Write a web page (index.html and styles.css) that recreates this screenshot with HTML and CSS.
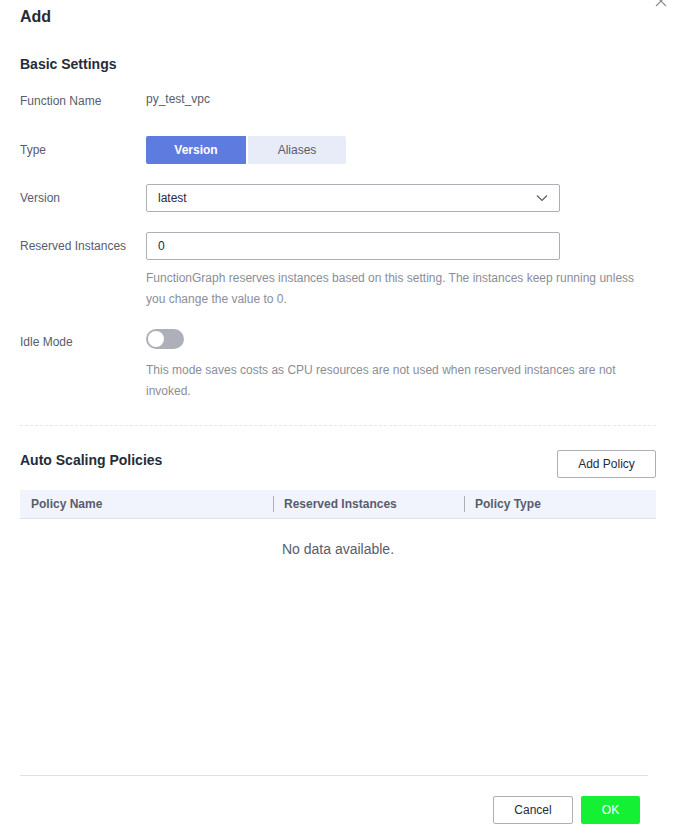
FILE: index.html
```html
<!DOCTYPE html>
<html>
<head>
<meta charset="utf-8">
<link rel="stylesheet" href="styles.css">
</head>
<body>
<div class="dialog">
  <button class="close" aria-label="Close">
    <svg width="12" height="12" viewBox="0 0 12 12"><path d="M1 1L11 11M11 1L1 11" stroke="#8a8e99" stroke-width="1.2" fill="none"/></svg>
  </button>
  <h1 class="title">Add</h1>
  <h2 class="section-title first">Basic Settings</h2>

  <div class="row row-name">
    <div class="label">Function Name</div>
    <div class="value">py_test_vpc</div>
  </div>

  <div class="row">
    <div class="label">Type</div>
    <div class="segmented">
      <span class="seg active">Version</span>
      <span class="seg">Aliases</span>
    </div>
  </div>

  <div class="row">
    <div class="label">Version</div>
    <div class="field select">
      <span>latest</span>
      <svg width="12" height="8" viewBox="0 0 12 8"><path d="M1 1.5L6 6.5L11 1.5" stroke="#575d6c" stroke-width="1.2" fill="none"/></svg>
    </div>
  </div>

  <div class="row">
    <div class="label">Reserved Instances</div>
    <div class="field"><span>0</span></div>
  </div>
  <p class="help">FunctionGraph reserves instances based on this setting. The instances keep running unless you change the value to 0.</p>

  <div class="row row-toggle">
    <div class="label">Idle Mode</div>
    <div class="toggle"><span class="knob"></span></div>
  </div>
  <p class="help help-2">This mode saves costs as CPU resources are not used when reserved instances are not invoked.</p>

  <div class="divider"></div>

  <div class="section-head">
    <h2 class="section-title">Auto Scaling Policies</h2>
    <button class="btn btn-default add">Add Policy</button>
  </div>

  <div class="table">
    <div class="thead">
      <div class="th c1">Policy Name</div>
      <div class="th c2">Reserved Instances</div>
      <div class="th c3">Policy Type</div>
    </div>
    <div class="empty">No data available.</div>
  </div>

  <div class="footer">
    <button class="btn btn-default cancel">Cancel</button>
    <button class="btn btn-ok">OK</button>
  </div>
</div>
</body>
</html>
```

FILE: styles.css
```css
* { box-sizing: border-box; }
html, body { margin: 0; padding: 0; background: #fff; }
body {
  font-family: "Liberation Sans", Arial, sans-serif;
  font-size: 12px;
  color: #252b3a;
}
.dialog {
  position: relative;
  min-height: 833px;
  display: flex;
  flex-direction: column;
  padding: 5px 21px 0 20px;
}
.close {
  position: absolute;
  top: -5px;
  right: 10px;
  width: 12px;
  height: 12px;
  padding: 0;
  border: 0;
  background: none;
  display: block;
}
.close svg { display: block; }
.title {
  margin: 0;
  font-size: 16px;
  line-height: 24px;
  font-weight: bold;
  color: #252b3a;
}
.section-title {
  margin: 0;
  font-size: 14px;
  line-height: 20px;
  font-weight: bold;
  color: #252b3a;
}
.section-title.first { margin-top: 25px; }
.row {
  display: flex;
  align-items: center;
  margin-top: 20px;
}
.row-name { margin-top: 12px; height: 28px; }
.row-name + .row { margin-top: 22px; }
.label {
  width: 126px;
  flex: none;
  color: #575d6c;
  line-height: 28px;
}
.row-name .label { padding-top: 2px; }
.value { color: #575d6c; padding-bottom: 2px; }
.segmented { display: flex; gap: 2px; }
.seg {
  width: 100px;
  height: 28px;
  line-height: 28px;
  text-align: center;
  background: #e8ecf9;
  color: #575d6c;
}
.seg:first-child { border-radius: 2px 0 0 2px; }
.seg:last-child { border-radius: 0 2px 2px 0; width: 98px; }
.seg.active { background: #5e7ce0; color: #fff; font-weight: bold; }
.field {
  width: 414px;
  height: 28px;
  border: 1px solid #adb0b8;
  border-radius: 2px;
  padding: 0 11px;
  display: flex;
  align-items: center;
  justify-content: space-between;
  color: #252b3a;
}
.help {
  margin: 8px 0 0 126px;
  width: 500px;
  color: #8a8e99;
  line-height: 21px;
}
.row-toggle { margin-top: 19px; align-items: flex-start; }
.row-toggle .label { line-height: 26px; }
.toggle {
  width: 38px;
  height: 20px;
  border-radius: 10px;
  background: #adb0b8;
  position: relative;
}
.knob {
  position: absolute;
  left: 2px;
  top: 2px;
  width: 16px;
  height: 16px;
  border-radius: 50%;
  background: #fff;
}
.help-2 { margin-top: 5px; }
.divider {
  margin-top: 23px;
  border-top: 1px dashed #e4e6ea;
}
.section-head {
  display: flex;
  justify-content: space-between;
  align-items: flex-start;
  margin-top: 24px;
}
.btn {
  font-family: inherit;
  font-size: 12px;
  height: 28px;
  border-radius: 2px;
  padding: 0;
  cursor: pointer;
}
.btn-default {
  background: #fff;
  border: 1px solid #adb0b8;
  color: #252b3a;
}
.add { width: 99px; }
.table { margin-top: 12px; }
.thead {
  display: flex;
  height: 29px;
  background: #f1f4fc;
  border-bottom: 1px solid #dfe1e6;
  align-items: center;
}
.th {
  font-weight: bold;
  color: #575d6c;
  padding-left: 11px;
  position: relative;
  line-height: 28px;
}
.c1 { width: 253px; flex: none; }
.c2 { width: 191px; flex: none; }
.c3 { flex: 1; }
.c2::before, .c3::before {
  content: "";
  position: absolute;
  left: 0;
  top: 6px;
  height: 16px;
  border-left: 1px solid #adb0b8;
}
.empty {
  text-align: center;
  color: #575d6c;
  font-size: 14px;
  line-height: 20px;
  margin-top: 20px;
}
.footer {
  margin-top: auto;
  margin-right: 8px;
  margin-bottom: 9px;
  border-top: 1px solid #dfe1e6;
  padding: 20px 8px 0 0;
  display: flex;
  justify-content: flex-end;
  gap: 8px;
}
.cancel { width: 80px; }
.btn-ok {
  width: 59px;
  border: 0;
  background: #14f034;
  color: #fff;
}
```
